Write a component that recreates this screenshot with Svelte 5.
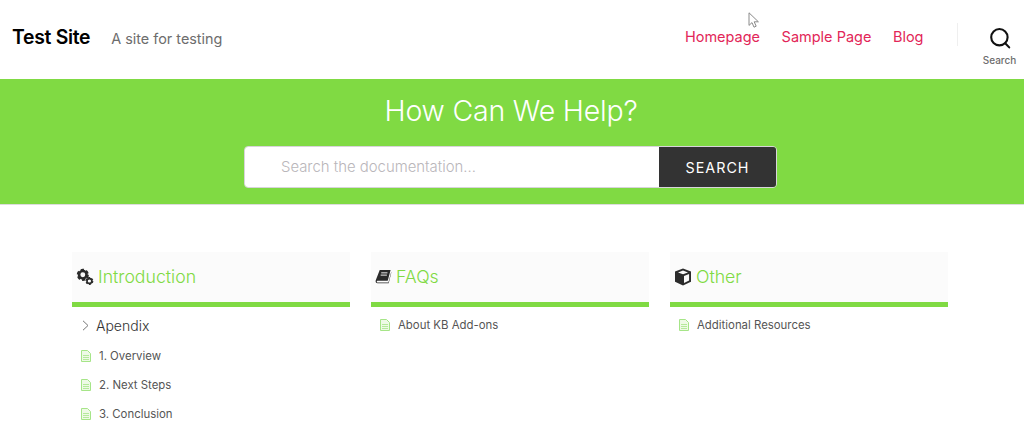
<script lang="ts">
  const nav = ["Homepage", "Sample Page", "Blog"];

  const categories = [
    {
      title: "Introduction",
      icon: "gears",
      folders: ["Apendix"],
      docs: ["1. Overview", "2. Next Steps", "3. Conclusion"]
    },
    { title: "FAQs", icon: "book", folders: [], docs: ["About KB Add-ons"] },
    { title: "Other", icon: "cube", folders: [], docs: ["Additional Resources"] }
  ];
</script>

{#snippet gear(cx, cy, r, hole)}
  <circle {cx} {cy} r={r * 0.72} fill="none" stroke="#2b2b2b" stroke-width={r * 0.5} />
  <circle {cx} {cy} r={r} fill="none" stroke="#2b2b2b" stroke-width={r * 0.34} stroke-dasharray={`${r * 0.62} ${r * 0.43}`} />
  <circle {cx} {cy} r={hole} fill="#fafafa" />
{/snippet}

<header class="site-header">
  <div class="brand">
    <span class="site-title">Test Site</span>
    <span class="site-desc">A site for testing</span>
  </div>
  <nav class="main-nav">
    {#each nav as item}
      <a href="#top">{item}</a>
    {/each}
  </nav>
  <div class="search-toggle">
    <svg width="22" height="22" viewBox="0 0 22 22" fill="none" stroke="#111" stroke-width="2.1">
      <circle cx="10.4" cy="10.2" r="8.2" />
      <path d="M16.2 16.2l4 4.2" stroke-linecap="round" />
    </svg>
    <span>Search</span>
  </div>
</header>

<svg class="cursor" width="12" height="17" viewBox="0 0 12 17">
  <path d="M1 .8v12.6l3-2.8 2 4.6 2.2-1-2-4.4h4.2z" fill="#fff" stroke="#8a8a8a" stroke-width="1" />
</svg>

<section class="hero">
  <h1>How Can We Help?</h1>
  <form class="search-form" on:submit|preventDefault>
    <input type="text" placeholder="Search the documentation..." />
    <button type="submit">SEARCH</button>
  </form>
</section>

<main class="categories">
  {#each categories as cat}
    <section class="category">
      <h2>
        {#if cat.icon === "gears"}
          <svg class="cat-icon" width="18" height="18" viewBox="0 0 18 18">
            {@render gear(6.8, 6.8, 5.2, 1.7)}
            {@render gear(13.4, 13, 3.4, 1.1)}
          </svg>
        {:else if cat.icon === "book"}
          <svg class="cat-icon" width="17" height="18" viewBox="0 0 18 18">
            <path d="M5 1.5h11.5l-3 11.5H2.6c-.9 0-1 1.8 0 1.8h11.6l3-11.3v1.2l-2.7 11H2.8C.8 15.7.3 14 .8 12.4z" fill="#2b2b2b" />
            <path d="M6.6 4.6h6.6M6 7h6.6" stroke="#fafafa" stroke-width="1" />
          </svg>
        {:else}
          <svg class="cat-icon" width="18" height="18" viewBox="0 0 18 18">
            <path d="M9 .6l8 3v10.2l-8 3.8-8-3.8V3.6z" fill="#2b2b2b" />
            <path d="M9 2.6l5 1.8-5 1.9-5-1.9zM10 8l5.1-1.9v6.4L10 15z" fill="#fafafa" />
          </svg>
        {/if}
        <span>{cat.title}</span>
      </h2>
      <ul>
        {#each cat.folders as folder}
          <li class="folder">
            <svg width="7" height="11" viewBox="0 0 7 11" fill="none" stroke="#777" stroke-width="1">
              <path d="M1 .8l5 4.7-5 4.7" />
            </svg>
            <a href="#top">{folder}</a>
          </li>
        {/each}
        {#each cat.docs as doc}
          <li class="doc">
            <svg width="10" height="12" viewBox="0 0 10 12" fill="none" stroke="#a6e588" stroke-width="1">
              <path d="M.5.5h6l3 3v8h-9z" fill="#eefae6" />
              <path d="M2 5.5h6M2 7.5h6M2 9.5h6" stroke-width=".8" />
            </svg>
            <a href="#top">{doc}</a>
          </li>
        {/each}
      </ul>
    </section>
  {/each}
</main>

<style>
  :global(body) {
    margin: 0;
    background: #fff;
    font-family: Inter, "Liberation Sans", sans-serif;
    overflow: hidden;
  }

  a {
    text-decoration: none;
    color: inherit;
  }

  .site-header {
    display: flex;
    align-items: center;
    height: 79px;
    padding: 0 0 0 12px;
    box-sizing: border-box;
  }

  .brand {
    display: flex;
    align-items: baseline;
    gap: 21px;
    flex: 1;
    margin-top: -5px;
  }

  .site-title {
    font-size: 19.4px;
    font-weight: 600;
    color: #000;
    letter-spacing: -0.3px;
  }

  .site-desc {
    font-size: 14.4px;
    color: #6d6d6d;
  }

  .main-nav {
    display: flex;
    gap: 21.5px;
    margin-top: -6px;
    font-size: 14.5px;
    color: #e22658;
  }

  .search-toggle {
    display: flex;
    flex-direction: column;
    align-items: center;
    justify-content: center;
    gap: 5px;
    width: 67px;
    height: 46px;
    margin-left: 33.5px;
    margin-top: 13px;
    padding-left: 17px;
    box-sizing: border-box;
    border-left: 1px solid #efefef;
    border-image: linear-gradient(#efefef 50%, transparent 50%) 1;
    font-size: 10px;
    font-weight: 500;
    color: #6d6d6d;
  }

  .cursor {
    position: absolute;
    left: 748px;
    top: 12px;
  }

  .hero {
    display: flex;
    flex-direction: column;
    align-items: center;
    height: 126px;
    box-sizing: border-box;
    padding-top: 13px;
    background: #80da43;
    border-bottom: 1px solid #dcdcdc;
  }

  h1 {
    margin: 0 2px 16px 0;
    font-size: 28.5px;
    line-height: 38px;
    font-weight: 300;
    color: #fff;
    letter-spacing: -0.2px;
  }

  .search-form {
    display: flex;
    width: 533px;
    height: 42px;
    margin-right: 3px;
    border: 1px solid #d8d4da;
    border-radius: 4px;
    box-sizing: border-box;
    overflow: hidden;
  }

  .search-form input {
    flex: 1;
    min-width: 0;
    border: none;
    outline: none;
    padding: 0 0 0 36px;
    background: #fff;
    font: inherit;
    font-size: 14.9px;
    font-weight: 300;
  }

  .search-form input::placeholder {
    color: #b9b6ba;
    opacity: 1;
  }

  .search-form button {
    width: 117px;
    border: none;
    padding: 0;
    background: #333;
    color: #fff;
    font: inherit;
    font-size: 14.3px;
    letter-spacing: 1px;
  }

  .categories {
    display: grid;
    grid-template-columns: repeat(3, 278px);
    gap: 21px;
    padding: 47px 0 0 72px;
  }

  h2 {
    display: flex;
    align-items: center;
    gap: 4px;
    height: 50px;
    margin: 0;
    padding: 0 0 1px 4px;
    box-sizing: content-box;
    height: 49px;
    background: #fbfbfb;
    border-bottom: 5px solid #80da43;
    font-size: 17.7px;
    font-weight: 300;
    color: #80da43;
  }

  .cat-icon {
    flex: none;
  }

  ul {
    list-style: none;
    margin: 0;
    padding: 7px 0 0 9px;
  }

  li {
    display: flex;
    align-items: center;
    color: #555;
  }

  .folder {
    gap: 7px;
    height: 22px;
    margin-bottom: 9px;
    padding-left: 1px;
    font-size: 14px;
    font-weight: 300;
    color: #333;
  }

  .doc {
    gap: 8px;
    height: 22px;
    margin-bottom: 7px;
    font-size: 11.4px;
  }
</style>
